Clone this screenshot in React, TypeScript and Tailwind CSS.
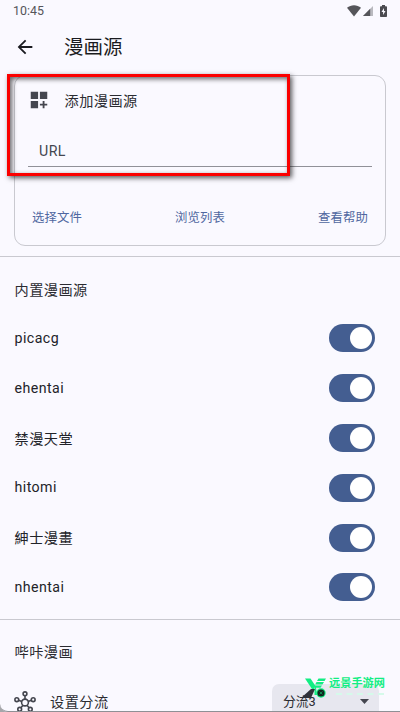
import { useState } from "react";

const SOURCES = [
  { name: "picacg", cjk: false },
  { name: "ehentai", cjk: false },
  { name: "禁漫天堂", cjk: true },
  { name: "hitomi", cjk: false },
  { name: "紳士漫畫", cjk: true },
  { name: "nhentai", cjk: false },
];

function StatusBar() {
  return (
    <div className="flex h-[22px] shrink-0 items-center justify-between pl-[13px] pr-[13px] text-[12.400px] text-[#55555a]">
      <span className="leading-[22px]">10:45</span>
      <div className="flex items-center">
        <svg width="14" height="12" viewBox="0 0 14 12" fill="#55555a">
          <path d="M0 2.8C4-.6 10-.6 14 2.8L7 11.5Z" />
        </svg>
        <svg className="ml-[2px]" width="10" height="10" viewBox="0 0 10 10">
          <path d="M0 10 10 0V10Z" fill="#b9b9bf" />
          <path d="M0 10 7.2 2.8V10Z" fill="#55555a" />
        </svg>
        <svg className="ml-[7px]" width="7" height="12" viewBox="0 0 7 12">
          <path d="M2 0h3v1.3h1.2q.8 0 .8.8v9.1q0 .8-.8.8H.8Q0 12 0 11.2V2.1q0-.8.8-.8H2Z" fill="#4b4b50" />
          <path d="M4 3 1.5 7h1.6v3l2.400-4H4Z" fill="#faf9ff" />
        </svg>
      </div>
    </div>
  );
}

function Header() {
  return (
    <header className="flex h-[50px] shrink-0 items-center pl-[14px]">
      <svg width="22" height="22" viewBox="0 0 24 24" fill="#1a1b20">
        <path d="M20 11H7.830l5.590-5.590L12 4l-8 8 8 8 1.410-1.410L7.830 13H20v-2z" />
      </svg>
      <h1 className="ml-[28px] pt-[2px] text-[19.500px] leading-[28px] text-[#1a1b20]">漫画源</h1>
    </header>
  );
}

function AddSourceCard() {
  return (
    <section className="relative mx-[14px] mt-[3px] flex h-[171px] shrink-0 flex-col rounded-[11px] border border-[#c9c9d0] px-[13px]">
      <div className="mt-[13px] flex h-[22px] items-center">
        <svg width="22" height="22" viewBox="0 0 24 24" fill="#44464f">
          <path d="M3 3h8v8H3zM13 3h8v8h-8zM3 13h8v8H3zM18 13h-2v3h-3v2h3v3h2v-3h3v-2h-3z" />
        </svg>
        <span className="ml-[14.500px] pt-[4px] text-[14.200px] tracking-[0.440px] text-[#2a2b31]">添加漫画源</span>
      </div>
      <div className="mt-[22px] h-[34px] border-b border-[#909198] pl-[11px] text-[14.200px] leading-[37px] tracking-[0.440px] text-[#44464f]">
        URL
      </div>
      <div className="mt-[40px] flex justify-between pl-[4px] pr-[4px] text-[12.400px] leading-[22px] tracking-[0.090px] text-[#4f67a0]">
        <button type="button">选择文件</button>
        <button type="button">浏览列表</button>
        <button type="button">查看帮助</button>
      </div>

      {/* Highlight frame */}
      <div className="pointer-events-none absolute -left-[8px] -top-[2px] h-[102px] w-[283px] border-[3px] border-[#fb0000] shadow-[2px_2px_5px_rgba(0,0,0,0.65),inset_2px_2px_5px_rgba(0,0,0,0.6)]" />
    </section>
  );
}

function SourceRow({ name, cjk }: { name: string; cjk: boolean }) {
  const [on, setOn] = useState(true);

  return (
    <div className="flex h-[49.800px] items-center justify-between pl-[14.500px] pr-[25px]">
      <span className={`text-[14.200px] tracking-[0.440px] text-[#222329] ${cjk ? "pt-[3px]" : ""}`}>
        {name}
      </span>
      <button
        type="button"
        role="switch"
        aria-checked={on}
        aria-label={name}
        onClick={() => setOn(!on)}
        className={`flex h-[28px] w-[46px] items-center rounded-full px-[3px] ${
          on ? "justify-end bg-[#445e91]" : "justify-start bg-[#c5c6d0]"
        }`}
      >
        <span className="h-[22px] w-[22px] rounded-full bg-white" />
      </button>
    </div>
  );
}

function HubIcon() {
  return (
    <svg width="22" height="22" viewBox="0 0 22 22" fill="none" stroke="#44464f" strokeWidth="1.600">
      <circle cx="11" cy="11.500" r="3.400" />
      <circle cx="11" cy="2.800" r="1.900" />
      <circle cx="2.800" cy="8.700" r="1.900" />
      <circle cx="19.200" cy="8.700" r="1.900" />
      <circle cx="5.700" cy="18.300" r="1.900" />
      <circle cx="16.300" cy="18.300" r="1.900" />
      <path d="M11 4.700v3.500M4.600 9.300l3.200 1.100M17.400 9.300l-3.200 1.100M6.900 16.800l2.100-2.600M15.100 16.800l-2.100-2.600" />
    </svg>
  );
}

function Watermark() {
  return (
    <div className="pointer-events-none absolute left-[301px] top-[676px] flex">
      <svg width="26" height="23" viewBox="0 0 26 23">
        <path d="M4 2.500h5.500l5 7.500-1.500 3h-2Z" fill="#12ee83" />
        <path d="M17.500 2.500H25L23.500 5h-7.500ZM15.500 6h7.500L21.500 8.500h-7.300ZM14 9.500h7l-1.500 2.200h-4.500L16 19h-2.500V13Z" fill="#12ee83" />
        <path d="M0 22 10 13h4l-4 9Z" fill="#303139" />
        <circle cx="20" cy="17" r="4.700" fill="#12ee83" />
        <circle cx="20" cy="17" r="3.600" fill="#10251d" />
        <path d="m18.600 15.600 2.800 2.800m0-2.800-2.800 2.800" stroke="#12c873" strokeWidth=".6" />
      </svg>
      <div className="ml-[2px] w-[58px]">
        <div className="whitespace-nowrap text-[11.200px] font-bold leading-[16px] text-[#12ee83]">远景手游网</div>
        <div className="ml-[7px] mt-px w-[48px] border-t-2 border-dashed border-[#d5faea]" />
      </div>
    </div>
  );
}

export default function App() {
  return (
    <div className="relative flex h-[712px] w-[400px] flex-col overflow-hidden bg-[#faf9ff] font-[Roboto,'Noto_Sans_CJK_SC',sans-serif]">
      <StatusBar />
      <Header />
      <AddSourceCard />

      {/* Built-in sources */}
      <section className="mt-[10px] shrink-0 border-t border-[#c9c9d0]">
        <h2 className="flex h-[56.500px] items-center pl-[14.500px] pt-[10px] text-[14.200px] tracking-[0.440px] text-[#2a2b31]">
          内置漫画源
        </h2>
        {SOURCES.map((source) => (
          <SourceRow key={source.name} name={source.name} cjk={source.cjk} />
        ))}
      </section>

      {/* Picacg settings */}
      <section className="mt-[6.500px] shrink-0 border-t border-[#c9c9d0]">
        <h2 className="flex h-[57px] items-center pl-[14.500px] pt-[9px] text-[14.200px] tracking-[0.440px] text-[#2a2b31]">
          哔咔漫画
        </h2>
        <div className="flex h-[50px] items-center pl-[14px] pr-[21px]">
          <HubIcon />
          <span className="ml-[14px] pt-[2px] text-[14.200px] tracking-[0.440px] text-[#2a2b31]">设置分流</span>
          <button
            type="button"
            className="ml-auto flex h-[36px] w-[107px] items-center justify-between rounded-[7px] bg-[#e7e7ef] pl-[11px] pr-[10px] text-[12.800px] text-[#2a2b31]"
          >
            分流3
            <svg width="9" height="5" viewBox="0 0 9 5" fill="#44464f">
              <path d="M0 0h9L4.500 5z" />
            </svg>
          </button>
        </div>
      </section>

      <Watermark />
      <div className="pointer-events-none absolute inset-x-0 bottom-0 h-[10px] rounded-bl-[8px] border-b border-[#8f9095] shadow-[-3px_3px_0_3px_#a5a6aa]" />
    </div>
  );
}
